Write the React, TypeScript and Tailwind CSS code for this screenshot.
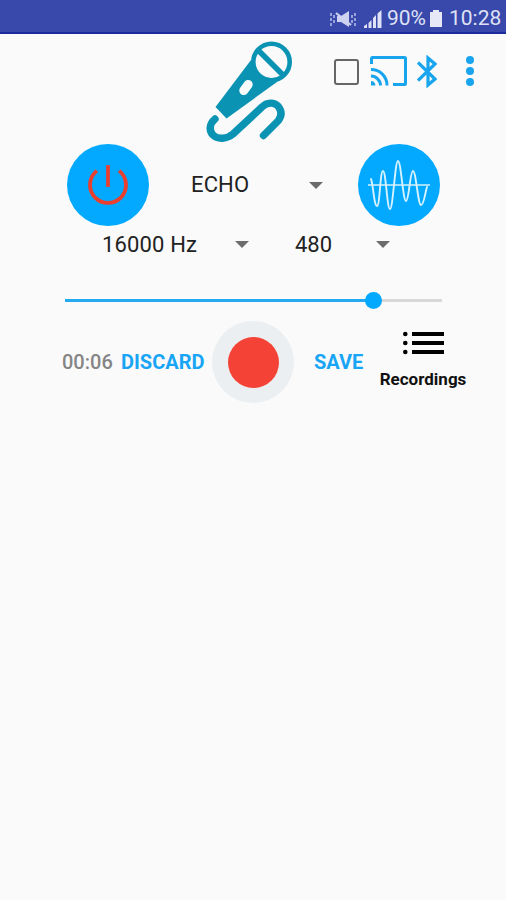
import React, { useState } from 'react';

interface SpinnerProps {
  value: string;
  className: string;
}

const Spinner: React.FC<SpinnerProps> = ({ value, className }) => (
  <button className={`flex items-center justify-between text-[22px] leading-[26px] text-[#222] whitespace-nowrap ${className}`}>
    <span>{value}</span>
    <svg className="w-[14px] h-[7px]" viewBox="0 0 14 7" fill="#6c6c6c"><path d="M0 0h14L7 7z" /></svg>
  </button>
);

const StatusBar: React.FC = () => (
  <div className="h-[34px] bg-[#3949ab] border-b-2 border-[#1c2c9c] flex items-center justify-end pr-[6px] pt-[5px] text-[21px] text-[#dfe2f6]">
    <svg className="w-[26px] h-[18px] mr-[8px]" viewBox="0 0 26 18" fill="none" stroke="#cdd2f0">
      <path d="M1 3v3M1 8v3M1 13v3M4 5v3M4 10v3M22 5v3M22 10v3M25 3v3M25 8v3M25 13v3" strokeWidth="1.3" />
      <path d="M7 6h4l8-5v16l-8-5H7z" fill="#cdd2f0" stroke="none" />
      <path d="M6 3l15 12" strokeWidth="2.200" />
    </svg>
    <svg className="w-[18px] h-[18px] mr-[5px]" viewBox="0 0 18 18" fill="#dfe2f6">
      <path d="M0 18v-2l3-2v4zM4.5 18v-5l3-3v8zM9 18V8l3-3v13zM13.5 18V3.500L17.500 0v18z" />
    </svg>
    <span className="w-[39px]">90%</span>
    <svg className="w-[12px] h-[17px] ml-[4px] mr-[7px]" viewBox="0 0 12 17" fill="#e6e8f8"><path d="M3 0h6v2h3v15H0V2h3z" /></svg>
    <span className="w-[51px]">10:28</span>
  </div>
);

const App: React.FC = () => {
  const [volume] = useState(82);

  return (
    <div className="w-full h-[900px] bg-[#fafafa] overflow-hidden font-['Roboto',sans-serif]">
      <StatusBar />

      <div className="h-[110px] flex items-start">
        <svg className="w-[90px] h-[110px] ml-[203px] shrink-0" viewBox="0 0 90 110" fill="none" stroke="#0b93b3">
          <path d="M48 26L12.500 73l11 11.500L74 48z" fill="#0b93b3" stroke="none" />
          <circle cx="68.500" cy="28" r="18.200" fill="#fafafa" strokeWidth="4.600" />
          <path d="M56 17l24 24" strokeWidth="5.500" />
          <path d="M40.800 56.500l4.400-6" stroke="#fafafa" strokeWidth="9" strokeLinecap="round" />
          <path d="M12 85C6 90 6 97 10 101c5 5 14 4 20-1l29-27c5-5 12-5 16-1 4 5 4 10 0 15L60.500 101.500" strokeWidth="7.400" strokeLinecap="round" strokeLinejoin="round" />
        </svg>
        <div className="flex items-center mt-[18px] ml-[41px] h-[38px]">
          <div className="w-[25px] h-[26px] border-2 border-[#666] rounded-[3px] mr-[11px] mt-px" />
          <svg className="w-[37px] h-[31px] mr-[10px]" viewBox="0 0 37 31" fill="none" stroke="#18a5ee" strokeWidth="3">
            <path d="M1.500 8V2.500a1 1 0 0 1 1-1h32a1 1 0 0 1 1 1v25a1 1 0 0 1-1 1H23" />
            <path d="M1 13.500c9 0 16 7 16 16M1 20c5 0 9.500 4.500 9.500 9.500" />
            <path d="M1 25c2.500 0 4.500 2 4.500 4.500H1z" fill="#18a5ee" stroke="none" />
          </svg>
          <svg className="w-[20px] h-[33px] mr-[29px]" viewBox="0 0 20 33" fill="none" stroke="#18a5ee" strokeWidth="3.200">
            <path d="M1 7.500L18 24l-7 6V3l7 6L1 25.500" />
          </svg>
          <div className="flex flex-col gap-[3px]">
            <span className="w-2 h-2 rounded-full bg-[#18a5ee]" />
            <span className="w-2 h-2 rounded-full bg-[#18a5ee]" />
            <span className="w-2 h-2 rounded-full bg-[#18a5ee]" />
          </div>
        </div>
      </div>

      <div className="flex items-center h-[82px] pl-[67px]">
        <button className="w-[82px] h-[82px] rounded-full bg-[#03a9ff] flex items-center justify-center">
          <svg className="w-[42px] h-[42px]" viewBox="0 0 42 42" fill="none" stroke="#e83f2e" strokeWidth="3.800" strokeLinecap="square">
            <path d="M21 3v18" />
            <path d="M8.500 8a18 18 0 1 0 25 0" />
          </svg>
        </button>
        <Spinner value="ECHO" className="w-[132px] ml-[42px] tracking-[0.15px]" />
        <button className="w-[82px] h-[82px] ml-[35px] rounded-full bg-[#03a9ff] flex items-center justify-center">
          <svg className="w-[62px] h-[52px]" viewBox="0 0 62 52" fill="none" stroke="#d6f2ff" strokeLinejoin="round" strokeLinecap="round">
            <path d="M0 26h62" strokeWidth="1.500" />
            <path d="M3 20C5 24 6 47 9 47S12 12 15 12 19 50 22 50 27 2 30 2s5 40 8 40S42 12 45 12s5 34 8 34 4-12 6-18" strokeWidth="1.900" />
          </svg>
        </button>
      </div>

      <div className="flex items-center h-[37px] pl-[102px]">
        <Spinner value="16000 Hz" className="w-[147px] tracking-[0.15px]" />
        <Spinner value="480" className="w-[95px] ml-[46px]" />
      </div>

      <div className="flex items-center h-[58px] pt-[16px] pl-[65px]">
        <div className="relative w-[377px] h-[3px] bg-[#d8d8d8]">
          <div className="h-full bg-[#25a9f0]" style={{ width: `${volume}%` }} />
          <span className="absolute -top-[7px] -ml-[9px] w-[17px] h-[17px] rounded-full bg-[#03a9ff]" style={{ left: `${volume}%` }} />
        </div>
      </div>

      <div className="flex items-center h-[82px] pl-[62px] text-[20px]">
        <span className="w-[59px] font-medium text-[#858585]">00:06</span>
        <button className="w-[91px] text-left font-bold text-[#18a5f5]">DISCARD</button>
        <button className="w-[82px] h-[82px] rounded-full bg-[#eceff1] flex items-center justify-center">
          <span className="w-[51px] h-[51px] rounded-full bg-[#f44336]" />
        </button>
        <button className="w-[66px] ml-[20px] text-left font-bold text-[#18a5f5]">SAVE</button>
        <button className="flex flex-col items-center w-[86px] mb-[4px] text-[17px] leading-[20px] font-bold text-[#111]">
          <svg className="w-[41px] h-[24px] mb-[14px]" viewBox="0 0 41 24" fill="#000">
            <path d="M9 1h32v4H9zM9 10h32v4H9zM9 19h32v4H9z" />
            <circle cx="2.300" cy="3" r="2.300" />
            <circle cx="2.300" cy="12" r="2.300" />
            <circle cx="2.300" cy="21" r="2.300" />
          </svg>
          Recordings
        </button>
      </div>
    </div>
  );
};

export default App;
